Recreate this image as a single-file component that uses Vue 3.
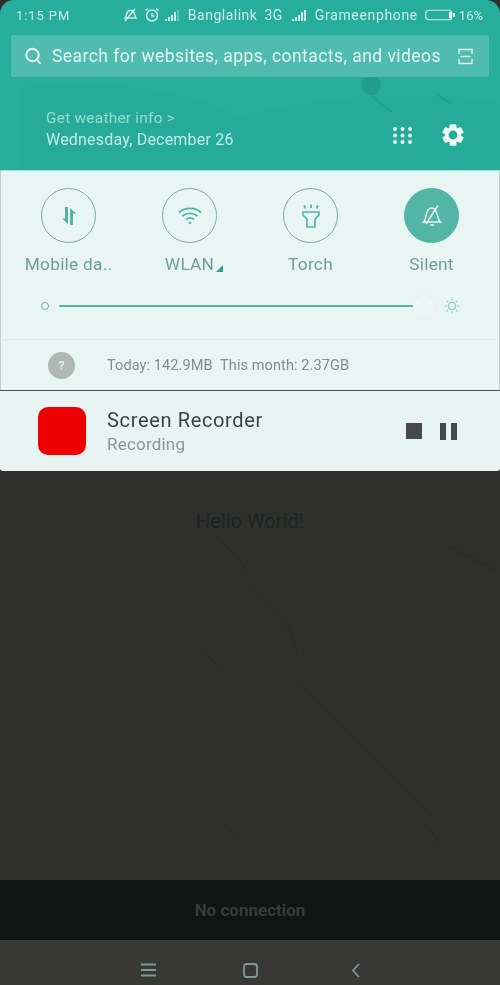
<script setup>
const toggles = [
  { label: 'Mobile da..', icon: 'data' },
  { label: 'WLAN', icon: 'wifi', corner: true },
  { label: 'Torch', icon: 'torch' },
  { label: 'Silent', icon: 'bell', active: true },
];

const sunRays = [0, 45, 90, 135, 180, 225, 270, 315];
const gearTeeth = [0, 60, 120, 180, 240, 300];
const gridDots = [0, 1, 2, 3, 4, 5, 6, 7, 8];
</script>

<template>
  <div class="screen">
    <header class="shade">
      <svg class="scenery" width="500" height="170" viewBox="0 0 500 170">
        <path d="M18 88 C90 80 170 84 240 116 C280 106 340 98 400 96 C440 94 470 98 500 104 V170 H18 Z" fill="#26aa99" />
        <circle cx="371" cy="85" r="10" fill="#219d8e" />
        <path d="M372 96 L392 112 M436 94 L450 103" stroke="#21a090" stroke-width="1.5" fill="none" />
      </svg>

      <div class="status">
        <span class="time">1:15 PM</span>
        <div class="status-right">
          <svg width="16" height="16" viewBox="0 0 16 16" fill="none" stroke="#cdeee8" stroke-width="1.5">
            <path d="M3 11 C5 9 4 5 7 3.5 C9 2.5 12 4 12.5 7 C13 9 13 10 14 11 Z" />
            <path d="M3 14 L13 2" />
          </svg>
          <svg class="alarm" width="16" height="16" viewBox="0 0 16 16" fill="none" stroke="#cdeee8" stroke-width="1.5">
            <circle cx="8" cy="8.5" r="5.5" />
            <path d="M8 6 V9 H10.5 M1.5 3.5 L4 1.5 M14.5 3.5 L12 1.5" />
          </svg>
          <svg class="signal signal--first" width="16" height="12" viewBox="0 0 16 12" fill="#cdeee8">
            <rect x="0" y="10" width="2" height="2" />
            <rect x="3" y="8" width="2" height="4" />
            <rect x="6" y="6" width="2" height="6" />
            <rect x="9" y="3" width="2" height="9" />
            <rect x="12" y="1" width="2" height="11" opacity="0.35" />
          </svg>
          <span class="carrier">Banglalink</span>
          <span class="carrier net">3G</span>
          <svg class="signal signal--second" width="16" height="12" viewBox="0 0 16 12" fill="#cdeee8">
            <rect x="0" y="10" width="2" height="2" />
            <rect x="3" y="8" width="2" height="4" />
            <rect x="6" y="6" width="2" height="6" />
            <rect x="9" y="3" width="2" height="9" />
            <rect x="12" y="1" width="2" height="11" />
          </svg>
          <span class="carrier carrier--wide">Grameenphone</span>
          <svg class="battery" width="31" height="12" viewBox="0 0 31 12" fill="none">
            <rect x="0.75" y="1.25" width="26" height="9.5" rx="3" stroke="#cdeee8" stroke-width="1.2" />
            <rect x="24" y="3" width="3" height="6" fill="#e6f7f4" />
            <rect x="28" y="4" width="2" height="4" fill="#e6f7f4" />
          </svg>
          <span class="percent">16%</span>
        </div>
      </div>

      <div class="search">
        <svg width="20" height="20" viewBox="0 0 20 20" fill="none" stroke="#e8f7f4" stroke-width="2">
          <circle cx="9.5" cy="9" r="6.2" />
          <path d="M14 14 L17 17" stroke-linecap="round" />
        </svg>
        <span class="search-text">Search for websites, apps, contacts, and videos</span>
        <svg width="17" height="17" viewBox="0 0 17 17" fill="none" stroke="#dff4f0" stroke-width="1.4">
          <path d="M2 6 V1.5 H15 V6 M2 11 V15.5 H15 V11 M3.5 8.5 H13.5" />
        </svg>
      </div>

      <div class="weather">
        <div class="weather-text">
          <div class="weather-link">Get weather info &gt;</div>
          <div class="weather-date">Wednesday, December 26</div>
        </div>
        <svg class="grid-icon" width="19" height="17" viewBox="0 0 19 17" fill="#e8f7f4">
          <circle
            v-for="n in gridDots"
            :key="n"
            :cx="2 + (n % 3) * 7.5"
            :cy="2 + Math.floor(n / 3) * 6.5"
            r="2"
          />
        </svg>
        <svg class="gear" width="22" height="22" viewBox="0 0 22 22">
          <rect
            v-for="a in gearTeeth"
            :key="a"
            x="7.6"
            y="0.3"
            width="6.8"
            height="5"
            rx="1"
            fill="#eef9f7"
            :transform="`rotate(${a} 11 11)`"
          />
          <circle cx="11" cy="11" r="6.3" fill="none" stroke="#eef9f7" stroke-width="3.8" />
        </svg>
      </div>
    </header>

    <section class="panel">
      <div class="toggles">
        <div v-for="t in toggles" :key="t.label" class="toggle">
          <div class="round" :class="{ 'round--on': t.active }">
            <svg v-if="t.icon === 'data'" width="18" height="20" viewBox="0 0 18 20" fill="#52b5a7">
              <path d="M5 1 H8 V18 L2 12.5 H5 Z" />
              <path d="M10 2 L16 7.5 H13 V19 H10 Z" />
            </svg>
            <svg v-if="t.icon === 'wifi'" width="24" height="18" viewBox="0 0 24 18" fill="none" stroke="#52b5a7" stroke-width="1.7">
              <path d="M1 5.5 C7 0 17 0 23 5.5 M4.5 9 C8.5 5.5 15.5 5.5 19.5 9 M8 12.5 C10.5 10.5 13.5 10.5 16 12.5" />
              <circle cx="12" cy="16" r="1.3" fill="#52b5a7" stroke="none" />
            </svg>
            <svg v-if="t.icon === 'torch'" width="20" height="24" viewBox="0 0 20 24" fill="none" stroke="#52b5a7" stroke-width="1.7">
              <path d="M2 8 H18 V11 L14 15 V23 H6 V15 L2 11 Z" />
              <path d="M3 1.5 L4.5 4.5 M10 0.5 V4 M17 1.5 L15.5 4.5" />
            </svg>
            <svg v-if="t.icon === 'bell'" width="20" height="24" viewBox="0 0 20 24" fill="none" stroke="#e8f5f2" stroke-width="1.4">
              <path d="M1.5 18 C4.5 15.5 3.5 9 6 6 C8 3.5 11 3.5 13 5.5 C16 8.5 15 15.5 18.5 18 Z" />
              <path d="M8 21 H12 M4 20 L16 1.5" />
            </svg>
          </div>
          <div class="toggle-label">
            {{ t.label }}<span v-if="t.corner" class="corner"></span>
          </div>
        </div>
      </div>

      <div class="brightness">
        <span class="dim"></span>
        <div class="track"><span class="thumb"></span></div>
        <svg class="sun" width="16" height="16" viewBox="0 0 16 16" fill="none" stroke="#8fcdc4" stroke-width="1.3">
          <circle cx="8" cy="8" r="3.6" />
          <path
            v-for="a in sunRays"
            :key="a"
            d="M8 0.5 V2.5"
            :transform="`rotate(${a} 8 8)`"
          />
        </svg>
      </div>

      <div class="usage">
        <span class="usage-dot">?</span>
        <span class="usage-text">Today: 142.9MB&nbsp;&nbsp;This month: 2.37GB</span>
      </div>
    </section>

    <section class="notice">
      <div class="notice-icon"></div>
      <div class="notice-text">
        <div class="notice-title">Screen Recorder</div>
        <div class="notice-sub">Recording</div>
      </div>
      <div class="controls">
        <span class="stop"></span>
        <span class="pause"><i></i><i></i></span>
      </div>
    </section>

    <main class="app">
      <svg class="artifacts" width="500" height="409" viewBox="0 0 500 409" fill="none" stroke="#262826" stroke-width="0.8">
        <path d="M217 65 L248 100 M252 115 L280 143 M286 150 L297 180 M300 212 L435 347" />
        <path d="M203 180 L220 197 M447 75 L497 100 M223 350 L235 365 M423 350 L440 372" />
      </svg>
      <span class="hello">Hello World!</span>
    </main>

    <div class="offline"><span>No connection</span></div>

    <nav class="nav">
      <svg width="15" height="14" viewBox="0 0 15 14" fill="none" stroke="#7d9a95" stroke-width="1.8">
        <path d="M0 1.5 H15 M0 7 H15 M0 12.5 H15" />
      </svg>
      <svg class="nav-home" width="15" height="15" viewBox="0 0 15 15" fill="none" stroke="#7d9a95" stroke-width="1.8">
        <rect x="1" y="1" width="13" height="13" rx="2.5" />
      </svg>
      <svg class="nav-back" width="9" height="15" viewBox="0 0 9 15" fill="none" stroke="#7d9a95" stroke-width="1.8">
        <path d="M8 1 L2 7.5 L8 14" />
      </svg>
    </nav>
  </div>
</template>

<style>
html,
body {
  margin: 0;
  background: #2f2f2d;
}
</style>

<style scoped>
.screen {
  width: 500px;
  height: 985px;
  display: flex;
  flex-direction: column;
  overflow: hidden;
  background: #2f2f2d;
  font-family: Roboto, "Liberation Sans", sans-serif;
  filter: blur(0.35px);
}

.shade {
  position: relative;
  height: 170px;
  flex: none;
  box-sizing: border-box;
  padding: 0 11px;
  background: #27ad9c;
  border-radius: 14px 14px 0 0;
  overflow: hidden;
}
.scenery {
  position: absolute;
  left: 0;
  top: 0;
}

.status {
  position: relative;
  height: 30px;
  display: flex;
  align-items: center;
  justify-content: space-between;
  padding: 0 6px 1px 5px;
  color: #cdeee8;
  font-size: 14px;
  letter-spacing: 0.5px;
}
.time {
  font-size: 13px;
  letter-spacing: 0.9px;
}
.status-right {
  display: flex;
  align-items: center;
}
.alarm {
  margin-left: 6px;
}
.signal--first {
  margin: 0 7px 0 5px;
}
.signal--second {
  margin: 0 7px 0 9px;
}
.net {
  margin-left: 7px;
}
.carrier--wide {
  letter-spacing: 0.65px;
}
.battery {
  margin: 0 3px 0 7px;
}
.percent {
  font-size: 13px;
  letter-spacing: 0;
}

.search {
  position: relative;
  height: 42px;
  margin-top: 4px;
  display: flex;
  align-items: center;
  padding: 0 15px 0 12px;
  border-radius: 3px;
  background: #50bcaf;
  color: #e4f6f3;
}
.search-text {
  flex: 1;
  margin-left: 9px;
  font-size: 17.5px;
  letter-spacing: 0.45px;
  white-space: nowrap;
}

.weather {
  position: relative;
  display: flex;
  align-items: center;
  margin-top: 31px;
  padding-left: 35px;
}
.weather-text {
  flex: 1;
  line-height: 21px;
  letter-spacing: 0.2px;
}
.weather-link {
  font-size: 15.5px;
  color: #9adcd2;
}
.weather-date {
  font-size: 16px;
  color: #c4ece5;
}
.grid-icon {
  margin: 13px 0 0 0;
}
.gear {
  margin: 12px 25px 0 30px;
}

.panel {
  flex: none;
  height: 220px;
  box-sizing: border-box;
  background: #e8f5f2;
  border-top: 1px solid #8ee8dc;
  box-shadow: inset 1px 0 0 #c4ccca, inset -1px 0 0 #c4ccca;
  display: flex;
  flex-direction: column;
}
.toggles {
  display: grid;
  grid-template-columns: repeat(4, 121px);
  padding: 17px 0 0 8px;
}
.toggle {
  display: flex;
  flex-direction: column;
  align-items: center;
}
.round {
  width: 55px;
  height: 55px;
  box-sizing: border-box;
  border-radius: 50%;
  border: 1px solid #7fa8a2;
  display: flex;
  align-items: center;
  justify-content: center;
}
.round--on {
  background: #52b5a7;
  border-color: #52b5a7;
}
.toggle-label {
  position: relative;
  margin-top: 10px;
  font-size: 17.3px;
  line-height: 22px;
  letter-spacing: 0.25px;
  color: #6f9e98;
  white-space: nowrap;
}
.corner {
  position: absolute;
  right: -9px;
  bottom: 3px;
  width: 0;
  height: 0;
  border-left: 7px solid transparent;
  border-bottom: 7px solid #2f9d8e;
}

.brightness {
  display: flex;
  align-items: center;
  margin-top: 19px;
  padding-left: 41px;
  height: 24px;
}
.dim {
  width: 8px;
  height: 8px;
  box-sizing: border-box;
  border-radius: 50%;
  border: 1px solid #6fa8a0;
}
.track {
  position: relative;
  width: 355px;
  height: 2.5px;
  margin-left: 10px;
  background: #52b5a7;
  border-radius: 2px;
}
.thumb {
  position: absolute;
  right: -21px;
  top: -10px;
  width: 22px;
  height: 22px;
  border-radius: 50%;
  background: #ecf6f4;
  box-shadow: 0 0 1px rgba(120, 150, 145, 0.2);
}
.sun {
  margin-left: 30px;
}

.usage {
  margin-top: 21px;
  flex: 1;
  border-top: 1px solid #dcebe7;
  display: flex;
  align-items: center;
  padding-left: 48px;
}
.usage-dot {
  width: 27px;
  height: 27px;
  border-radius: 50%;
  background: #b0b8b5;
  color: #e2e8e6;
  font-size: 13px;
  font-weight: 700;
  display: flex;
  align-items: center;
  justify-content: center;
}
.usage-text {
  margin-left: 32px;
  font-size: 14.5px;
  letter-spacing: 0.1px;
  color: #7f8e8b;
}

.notice {
  flex: none;
  height: 81px;
  box-sizing: border-box;
  border-top: 1px solid #4a5250;
  background: #e8f4f2;
  border-radius: 0 0 3px 3px;
  display: flex;
  align-items: center;
  padding: 0 43px 0 38px;
}
.notice-icon {
  width: 48px;
  height: 48px;
  border-radius: 10px;
  background: #ee0000;
}
.notice-text {
  flex: 1;
  margin-left: 21px;
  padding-top: 2px;
}
.notice-title {
  font-size: 20px;
  line-height: 25px;
  letter-spacing: 0.65px;
  color: #3b4341;
}
.notice-sub {
  font-size: 17px;
  line-height: 23px;
  letter-spacing: 0.2px;
  color: #8a9694;
}
.controls {
  display: flex;
  align-items: center;
  gap: 18px;
}
.stop {
  width: 16px;
  height: 16px;
  background: #46494a;
}
.pause {
  display: flex;
  gap: 5px;
}
.pause i {
  width: 6px;
  height: 17px;
  background: #46494a;
}

.app {
  position: relative;
  flex: 1;
  display: flex;
  justify-content: center;
  padding-top: 38px;
}
.artifacts {
  position: absolute;
  left: 0;
  top: 0;
}
.hello {
  position: relative;
  height: 24px;
  font-size: 20px;
  line-height: 24px;
  color: #1d2321;
}

.offline {
  flex: none;
  height: 60px;
  background: #101513;
  display: flex;
  align-items: center;
  justify-content: center;
  font-size: 17px;
  font-weight: 700;
  color: #383c3b;
}

.nav {
  flex: none;
  height: 45px;
  box-sizing: border-box;
  background: #383937;
  display: flex;
  align-items: center;
  padding: 15px 0 0 141px;
}
.nav-home {
  margin-left: 87px;
}
.nav-back {
  margin-left: 93px;
}
</style>
